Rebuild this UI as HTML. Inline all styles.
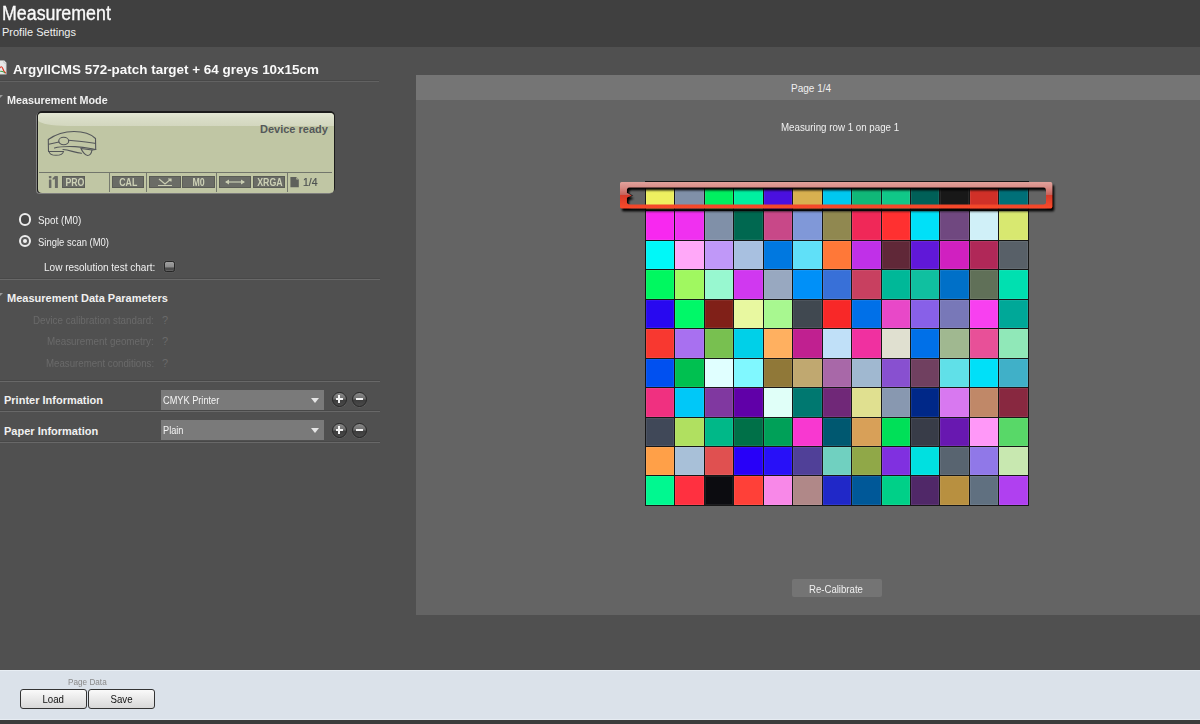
<!DOCTYPE html>
<html><head><meta charset="utf-8">
<style>
*{margin:0;padding:0;box-sizing:border-box}
html,body{width:1200px;height:724px;overflow:hidden;background:#505050;font-family:"Liberation Sans",sans-serif;color:#f0f0f0;position:relative}
.abs{position:absolute}
.t{position:absolute;white-space:nowrap;line-height:1}
.b{font-weight:bold}
#hdr{left:0;top:0;width:1200px;height:47px;background:#404040}
.sep{position:absolute;left:0;height:1px;background:#686868}
.sepd{position:absolute;left:0;height:1px;background:#484848}
#panel{left:416px;top:75px;width:784px;height:540px;background:#646464}
#phead{left:416px;top:75px;width:784px;height:25px;background:#757575}
#grid{left:645px;top:181px;width:384px;height:325px;background:#161616;display:grid;grid-template-columns:repeat(13,28.45px);grid-template-rows:repeat(11,28.45px);gap:1px;padding:1px 0 0 1px}
#grid div{box-shadow:inset 0 0 0 1px rgba(255,255,255,0.07)}
#bottom{left:0;top:670px;width:1200px;height:50px;background:#dbe2ea;border-top:1px solid #e8eef4;border-bottom:1px solid #e6ecf2}
#bstrip{left:0;top:720px;width:1200px;height:4px;background:#3c3c3c}
.btn{position:absolute;border:1px solid #333;border-radius:3px;background:linear-gradient(#fafafa,#d8d8d8);color:#111;font-size:11px;text-align:center}
.lcdbox{position:absolute;top:176px;height:12px;background:#6a6c66;border:1px solid #5a5c56;color:#cdd1b6;font-weight:bold;font-size:11px;line-height:10px;text-align:center;overflow:hidden}
.lcdbox span{display:inline-block;transform:scaleX(0.8)}
.vsep{position:absolute;top:173px;width:1px;height:19px;background:#767a6e}
.radio{position:absolute;width:12.5px;height:12.5px;border:2px solid #ececec;border-radius:50%;background:#474747}
.gl{position:absolute;white-space:nowrap;line-height:1;color:#6a6a6a;font-size:11px;text-align:right}
.dd{position:absolute;left:161px;width:163px;height:20px;background:#7a7a7a}
.dd .arr{position:absolute;left:150px;top:8px;width:0;height:0;border-left:4px solid transparent;border-right:4px solid transparent;border-top:5px solid #e6e6e6}
.pm{position:absolute;width:15px;height:15px;border-radius:50%;background:linear-gradient(#8a8a8a 0%,#6a6a6a 48%,#3c3c3c 52%,#4a4a4a 100%);border:1.5px solid #262626;box-shadow:0 0.5px 0 #6a6a6a}
.pm:before{content:"";position:absolute;left:2.5px;top:5px;width:7px;height:2.5px;background:#f4f4f4}
.pm.plus:after{content:"";position:absolute;left:4.75px;top:2.5px;width:2.5px;height:7.5px;background:#f4f4f4}
</style></head><body>
<div class="abs" id="hdr"></div>
<div class="t" style="left:2px;top:3px;font-size:20px;color:#fafafa;transform-origin:0 0;transform:scaleX(0.89);-webkit-text-stroke:0.35px #fafafa">Measurement</div>
<div class="t" style="left:2px;top:27px;font-size:11px;color:#f0f0f0">Profile Settings</div>

<!-- doc icon -->
<svg class="abs" style="left:0;top:60px" width="7" height="15" viewBox="0 0 7 15">
<path d="M-1,0.5 L4,0.5 L6.3,3 L6.3,14.3 L-1,14.3 Z" fill="#e8e8e8" stroke="#aaa" stroke-width="0.6"/>
<path d="M4,0.5 L4,3 L6.3,3" fill="#fff" stroke="#999" stroke-width="0.5"/>
<path d="M-1,9 C1,6 2,6 3,9 S4.5,13 6,13" fill="none" stroke="#e03020" stroke-width="1.1"/>
<path d="M-1,12 C1,10.5 3,11.5 5,13" fill="none" stroke="#30a040" stroke-width="1"/>
</svg>
<div class="t b" style="left:13px;top:63px;font-size:13px;color:#fafafa;transform-origin:0 0;transform:scaleX(1.034)">ArgyllCMS 572-patch target + 64 greys 10x15cm</div>
<div class="sepd" style="top:80px;width:379px"></div><div class="sep" style="top:81px;width:379px;background:#626262"></div>

<svg class="abs" style="left:0;top:95px" width="4" height="4"><path d="M0,0 L3,0 L0,3Z" fill="#9a9a9a"/></svg>
<div class="t b" style="left:7px;top:95px;font-size:11px;transform-origin:0 0;transform:scaleX(0.98)">Measurement Mode</div>

<!-- LCD -->
<div class="abs" style="left:37px;top:111.2px;width:298px;height:81.8px;background:#1c1c1c;border-radius:5px 5px 5px 3px;box-shadow:-0.8px 0.8px 0 #8c8c8c"></div>
<div class="abs" style="left:38px;top:113px;width:295.5px;height:79.5px;background:#c0c6a4;border-radius:4px;overflow:hidden">
  <div class="abs" style="left:0;top:0;width:100%;height:12.5px;background:linear-gradient(#e4e7d4,#dadec8 40%,#d3d7bf);border-bottom-left-radius:30px 6px"></div>
</div>
<svg class="abs" style="left:44px;top:126px" width="60" height="36" viewBox="0 0 60 36">
<g fill="none" stroke="#54575a" stroke-width="1.1" stroke-linecap="round">
<path d="M4.5,25.5 L4.3,13.5 C12,8 22,5.5 30,5.5 C40,5.5 47,8 51.5,12.5 L51.7,23.5"/>
<path d="M4.7,18.2 L15,16"/><path d="M24.5,14.2 C35,15 45,16.5 51.5,17.4"/>
<ellipse cx="19.7" cy="15" rx="5" ry="3.7"/>
<path d="M10.5,22 C14,21 22,20.3 31,20.6 C40,21 46,22.5 51.7,23.5"/>
<path d="M19,23.5 C26,24 31,27 37.5,27.2"/>
<path d="M5,25.5 L19.5,25.5 C19,28 16,29.3 12,29.3 C8,29.3 5.5,28 5,25.5 Z" stroke-width="1.1"/>
<path d="M37,22.5 L48,24 C47.5,27 46,29.5 43.5,29.5 C41,29.5 38,25 37,22.5 Z"/>
<path d="M48,24 L51.7,23.5"/>
</g></svg>
<div class="t b" style="left:260px;top:124px;font-size:11px;color:#54585a;transform-origin:0 0;transform:scaleX(1.0)">Device ready</div>
<div class="abs" style="left:39px;top:172px;width:293px;height:1px;background:#72766c"></div>
<div class="vsep" style="left:109px"></div>
<div class="vsep" style="left:146px"></div>
<div class="vsep" style="left:216px"></div>
<div class="vsep" style="left:287px"></div>
<svg class="abs" style="left:48px;top:175px" width="11" height="14" viewBox="48 175 11 14"><g fill="#6a6c66"><rect x="48.9" y="176" width="2.5" height="2.3" rx="0.6"/><rect x="48.9" y="179.5" width="2.5" height="8.6" rx="0.5"/><rect x="54.9" y="176" width="3" height="12.1" rx="0.5"/><path d="M52.6,178.2 L54.9,176 L55.6,176 L55.6,179 L52.6,179.8Z"/></g></svg>
<div class="lcdbox" style="left:62px;width:23px"><span>PRO</span></div>
<div class="lcdbox" style="left:112px;width:32px"><span>CAL</span></div>
<div class="lcdbox" style="left:149px;width:32px"><svg width="30" height="10" viewBox="0 0 30 10" style="display:block"><path d="M9,2 L15,7 L21,2 M18,2 L21,2 L21,4.5 M8,8.5 L22,8.5" fill="none" stroke="#c9cdb2" stroke-width="1.2"/></svg></div>
<div class="lcdbox" style="left:182px;width:33px"><span>M0</span></div>
<div class="lcdbox" style="left:219px;width:32px"><svg width="30" height="10" viewBox="0 0 30 10" style="display:block"><path d="M6,5 L24,5" stroke="#c9cdb2" stroke-width="1.2"/><path d="M5,5 L9,2.5 L9,7.5Z M25,5 L21,2.5 L21,7.5Z" fill="#c9cdb2"/></svg></div>
<div class="lcdbox" style="left:253px;width:32px"><span>XRGA</span></div>
<svg class="abs" style="left:290px;top:177px" width="10" height="11" viewBox="0 0 10 11"><path d="M0.4,0 L6.3,0 L8.8,2.5 L8.8,10.3 L0.4,10.3Z" fill="#5f615c"/><path d="M6.3,0.2 L6.3,2.6 L8.7,2.6Z" fill="#b8bc9e"/></svg>
<div class="t" style="left:302.5px;top:177px;font-size:11px;color:#4e5252;transform-origin:0 0;transform:scaleX(0.95);-webkit-text-stroke:0.2px #4e5252">1/4</div>

<!-- radios -->
<div class="radio" style="left:18.8px;top:213px"></div>
<div class="t" style="left:38px;top:215px;font-size:11px;transform-origin:0 0;transform:scaleX(0.895)">Spot (M0)</div>
<div class="radio" style="left:18.8px;top:234.8px;background:#5a5a5a"><div class="abs" style="left:2.25px;top:2.25px;width:4px;height:4px;border-radius:50%;background:#f0f0f0"></div></div>
<div class="t" style="left:38px;top:237px;font-size:11px;transform-origin:0 0;transform:scaleX(0.86)">Single scan (M0)</div>
<div class="t" style="left:44px;top:262px;font-size:11px;transform-origin:0 0;transform:scaleX(0.91)">Low resolution test chart:</div>
<div class="abs" style="left:164px;top:261px;width:11px;height:11px;border-radius:2.5px;background:linear-gradient(#a0a0a0,#8a8a8a 60%,#4c4c4c 62%,#4c4c4c 85%,#6a6a6a);border:1px solid #262626;box-shadow:0 0 0 0.6px #5c5c5c"></div>
<div class="sepd" style="top:278px;width:380px"></div>
<div class="sep" style="top:279px;width:380px"></div>

<svg class="abs" style="left:0;top:293px" width="4" height="4"><path d="M0,0 L3,0 L0,3Z" fill="#9a9a9a"/></svg>
<div class="t b" style="left:7px;top:293px;font-size:11px">Measurement Data Parameters</div>
<div class="gl" style="left:33px;top:315px;transform-origin:0 0;transform:scaleX(0.89)">Device calibration standard:</div>
<div class="gl" style="left:47px;top:336px;transform-origin:0 0;transform:scaleX(0.895)">Measurement geometry:</div>
<div class="gl" style="left:46px;top:358px;transform-origin:0 0;transform:scaleX(0.88)">Measurement conditions:</div>
<div class="gl" style="left:162px;top:315px">?</div>
<div class="gl" style="left:162px;top:336px">?</div>
<div class="gl" style="left:162px;top:358px">?</div>
<div class="sepd" style="top:380px;width:380px"></div>
<div class="sep" style="top:381px;width:380px"></div>

<div class="t b" style="left:4px;top:395px;font-size:11px">Printer Information</div>
<div class="dd" style="top:389.5px"><div class="t" style="left:2px;top:6px;font-size:10px;color:#f4f4f4;transform-origin:0 0;transform:scaleX(0.92)">CMYK Printer</div><div class="arr"></div></div>
<div class="pm plus" style="left:332px;top:391.5px"></div>
<div class="pm" style="left:352px;top:391.5px"></div>
<div class="sepd" style="top:410px;width:380px"></div>
<div class="sep" style="top:411px;width:380px"></div>

<div class="t b" style="left:4px;top:426px;font-size:11px">Paper Information</div>
<div class="dd" style="top:420px"><div class="t" style="left:2px;top:6px;font-size:10px;color:#f4f4f4;transform-origin:0 0;transform:scaleX(0.92)">Plain</div><div class="arr"></div></div>
<div class="pm plus" style="left:332px;top:422.5px"></div>
<div class="pm" style="left:352px;top:422.5px"></div>
<div class="sepd" style="top:441px;width:380px"></div>
<div class="sep" style="top:442px;width:380px"></div>

<div class="abs" id="panel"></div>
<div class="abs" id="phead"></div>
<div class="t" style="left:791px;top:84px;font-size:10px">Page 1/4</div>
<div class="t" style="left:781px;top:123px;font-size:10px;transform-origin:0 0;transform:scaleX(0.975)">Measuring row 1 on page 1</div>

<div class="abs" id="grid"><div style="background:#eef060"></div><div style="background:#8090a8"></div><div style="background:#00f060"></div><div style="background:#00f0a0"></div><div style="background:#4a10e0"></div><div style="background:#d8b050"></div><div style="background:#00c8f0"></div><div style="background:#10b878"></div><div style="background:#10c888"></div><div style="background:#006058"></div><div style="background:#181818"></div><div style="background:#d03028"></div><div style="background:#007078"></div><div style="background:#f828f0"></div><div style="background:#f030f0"></div><div style="background:#8090a8"></div><div style="background:#006850"></div><div style="background:#c84888"></div><div style="background:#8098d8"></div><div style="background:#908850"></div><div style="background:#f02858"></div><div style="background:#ff3030"></div><div style="background:#00e0f8"></div><div style="background:#704880"></div><div style="background:#d0f0f8"></div><div style="background:#d8e870"></div><div style="background:#00f8f8"></div><div style="background:#ffa8f8"></div><div style="background:#c098f8"></div><div style="background:#a8c0e0"></div><div style="background:#0078e0"></div><div style="background:#60e0f8"></div><div style="background:#ff7838"></div><div style="background:#c030e8"></div><div style="background:#602838"></div><div style="background:#6018d8"></div><div style="background:#d020c0"></div><div style="background:#b02858"></div><div style="background:#586068"></div><div style="background:#00f860"></div><div style="background:#a0f860"></div><div style="background:#98f8d0"></div><div style="background:#d038f0"></div><div style="background:#98a8c0"></div><div style="background:#0090f8"></div><div style="background:#3870d8"></div><div style="background:#c84060"></div><div style="background:#00b898"></div><div style="background:#10c0a0"></div><div style="background:#0070c8"></div><div style="background:#607058"></div><div style="background:#00e0b0"></div><div style="background:#2808f0"></div><div style="background:#00f868"></div><div style="background:#802018"></div><div style="background:#e8f8a0"></div><div style="background:#a8f890"></div><div style="background:#404850"></div><div style="background:#f82828"></div><div style="background:#0070e8"></div><div style="background:#e848c8"></div><div style="background:#8860e8"></div><div style="background:#7878b8"></div><div style="background:#f840f0"></div><div style="background:#00a898"></div><div style="background:#f83830"></div><div style="background:#a870f0"></div><div style="background:#78c050"></div><div style="background:#00d0e8"></div><div style="background:#ffb060"></div><div style="background:#c02090"></div><div style="background:#c0e0f8"></div><div style="background:#f030a0"></div><div style="background:#e0e0d0"></div><div style="background:#0070e8"></div><div style="background:#a0b890"></div><div style="background:#e85098"></div><div style="background:#90e8b8"></div><div style="background:#0050f0"></div><div style="background:#00c050"></div><div style="background:#e0ffff"></div><div style="background:#80f8ff"></div><div style="background:#907838"></div><div style="background:#c0a870"></div><div style="background:#a868a8"></div><div style="background:#a0b8d0"></div><div style="background:#8850d0"></div><div style="background:#704060"></div><div style="background:#60e0e8"></div><div style="background:#00e0f8"></div><div style="background:#40b0c8"></div><div style="background:#f03080"></div><div style="background:#00c8f8"></div><div style="background:#8038a0"></div><div style="background:#6000a8"></div><div style="background:#e0fff8"></div><div style="background:#007870"></div><div style="background:#702878"></div><div style="background:#e0e090"></div><div style="background:#8898b0"></div><div style="background:#002888"></div><div style="background:#d878f0"></div><div style="background:#c08868"></div><div style="background:#882840"></div><div style="background:#404858"></div><div style="background:#b0e060"></div><div style="background:#00b888"></div><div style="background:#007048"></div><div style="background:#00a058"></div><div style="background:#f838d0"></div><div style="background:#005870"></div><div style="background:#d8a058"></div><div style="background:#00e058"></div><div style="background:#383c48"></div><div style="background:#6818b0"></div><div style="background:#ff98f8"></div><div style="background:#58d868"></div><div style="background:#ffa048"></div><div style="background:#a8c0d8"></div><div style="background:#e05050"></div><div style="background:#2800f8"></div><div style="background:#2810f8"></div><div style="background:#504098"></div><div style="background:#70d0c0"></div><div style="background:#90a848"></div><div style="background:#8030e0"></div><div style="background:#00e0e0"></div><div style="background:#586470"></div><div style="background:#9078e8"></div><div style="background:#c8e8b0"></div><div style="background:#00f890"></div><div style="background:#ff3040"></div><div style="background:#0c0c10"></div><div style="background:#ff4038"></div><div style="background:#f888e8"></div><div style="background:#b08888"></div><div style="background:#2028c8"></div><div style="background:#005898"></div><div style="background:#00d088"></div><div style="background:#502868"></div><div style="background:#b89040"></div><div style="background:#607080"></div><div style="background:#b040f0"></div></div>

<!-- scan bar -->
<svg class="abs" style="left:615px;top:176px;overflow:visible" width="445" height="40" viewBox="0 0 445 40">
<defs>
<linearGradient id="rg" x1="0" y1="0" x2="0" y2="1">
<stop offset="0" stop-color="#e2a29c"/><stop offset="0.2" stop-color="#d98e88"/><stop offset="0.49" stop-color="#c6625a"/>
<stop offset="0.5" stop-color="#d43a2a"/><stop offset="1" stop-color="#fa4a2c"/>
</linearGradient>
<filter id="ds" x="-5%" y="-50%" width="110%" height="200%"><feGaussianBlur in="SourceAlpha" stdDeviation="1.3"/><feOffset dx="1.5" dy="2.8" result="o"/><feComponentTransfer><feFuncA type="linear" slope="1"/></feComponentTransfer><feMerge><feMergeNode/><feMergeNode in="SourceGraphic"/></feMerge></filter>
<filter id="bl"><feGaussianBlur stdDeviation="0.7"/></filter>
</defs>
<path d="M11.9,26 L11.9,21.6 L16.7,19.4 L11.9,16.9 L11.9,13.7 Q11.9,11.2 14.4,11.2 L431,11.2" fill="none" stroke="#111" stroke-width="1.4" filter="url(#bl)" opacity="0.75"/>
<path filter="url(#ds)" fill="url(#rg)" fill-rule="evenodd" d="M6.5,5.9 L435.7,5.9 Q437.2,5.9 437.2,7.4 L437.2,30.7 Q437.2,32.2 435.7,32.2 L6.5,32.2 Q5,32.2 5,30.7 L5,7.4 Q5,5.9 6.5,5.9 Z
M14.4,11.2 L428.5,11.2 Q431,11.2 431,13.7 L431,25.9 Q431,28.4 428.5,28.4 L14.4,28.4 Q11.9,28.4 11.9,25.9 L11.9,21.6 L16.7,19.4 L11.9,16.9 L11.9,13.7 Q11.9,11.2 14.4,11.2 Z"/>
</svg>

<div class="abs" style="left:792px;top:579px;width:90px;height:18px;background:#747474;border-radius:2px"></div>
<div class="t" style="left:809px;top:585px;font-size:10px;transform-origin:0 0;transform:scaleX(0.96)">Re-Calibrate</div>

<div class="abs" id="bottom"></div>
<div class="abs" id="bstrip"></div>
<div class="t" style="left:68px;top:678px;font-size:9px;color:#8a8a8a;transform-origin:0 0;transform:scaleX(0.91)">Page Data</div>
<div class="btn" style="left:20px;top:689px;width:67px;height:20px;line-height:18px"><span style="display:inline-block;transform:scaleX(0.88)">Load</span></div>
<div class="btn" style="left:88px;top:689px;width:67px;height:20px;line-height:18px"><span style="display:inline-block;transform:scaleX(0.88)">Save</span></div>
</body></html>
